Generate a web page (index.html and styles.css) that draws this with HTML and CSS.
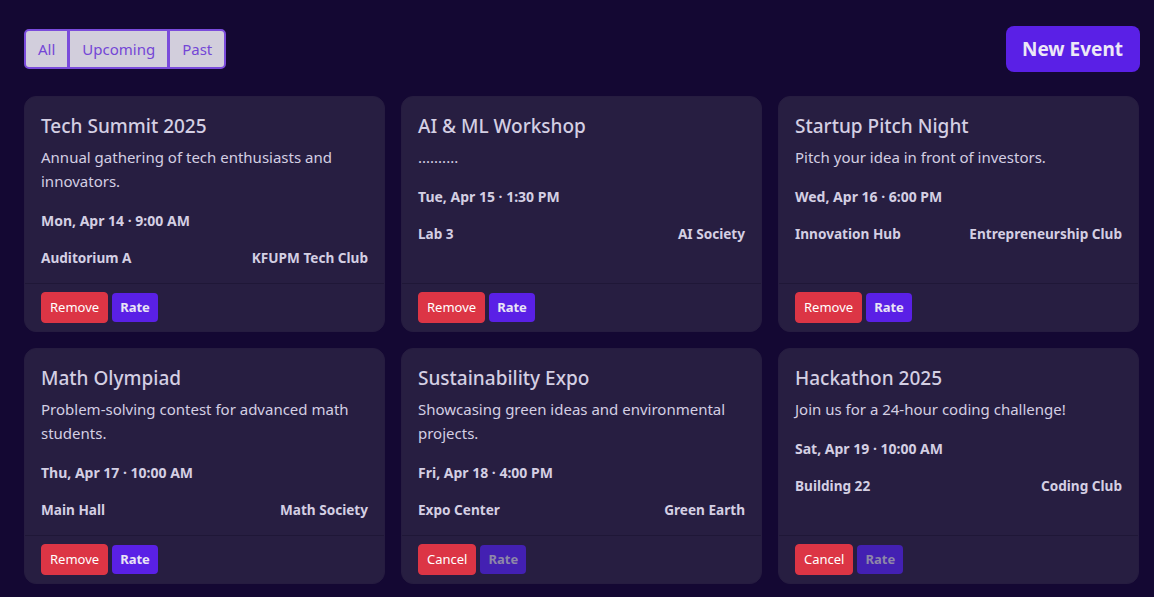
FILE: index.html
```html
<!DOCTYPE html>
<html lang="en">
<head>
<meta charset="utf-8">
<title>Events</title>
<link rel="stylesheet" href="styles.css">
</head>
<body>
<div class="page">
  <div class="toolbar">
    <div class="filters">
      <button class="filter">All</button>
      <button class="filter">Upcoming</button>
      <button class="filter">Past</button>
    </div>
    <button class="new-event">New Event</button>
  </div>
  <div class="grid">
    <div class="card">
      <div class="card-body">
        <h5 class="title">Tech Summit 2025</h5>
        <p class="desc">Annual gathering of tech enthusiasts and innovators.</p>
        <p class="date">Mon, Apr 14 · 9:00 AM</p>
        <div class="meta"><span>Auditorium A</span><span>KFUPM Tech Club</span></div>
      </div>
      <div class="card-footer"><button class="btn danger">Remove</button><button class="btn rate">Rate</button></div>
    </div>
    <div class="card">
      <div class="card-body">
        <h5 class="title">AI &amp; ML Workshop</h5>
        <p class="desc">..........</p>
        <p class="date">Tue, Apr 15 · 1:30 PM</p>
        <div class="meta"><span>Lab 3</span><span>AI Society</span></div>
      </div>
      <div class="card-footer"><button class="btn danger">Remove</button><button class="btn rate">Rate</button></div>
    </div>
    <div class="card">
      <div class="card-body">
        <h5 class="title">Startup Pitch Night</h5>
        <p class="desc">Pitch your idea in front of investors.</p>
        <p class="date">Wed, Apr 16 · 6:00 PM</p>
        <div class="meta"><span>Innovation Hub</span><span>Entrepreneurship Club</span></div>
      </div>
      <div class="card-footer"><button class="btn danger">Remove</button><button class="btn rate">Rate</button></div>
    </div>
    <div class="card">
      <div class="card-body">
        <h5 class="title">Math Olympiad</h5>
        <p class="desc">Problem-solving contest for advanced math students.</p>
        <p class="date">Thu, Apr 17 · 10:00 AM</p>
        <div class="meta"><span>Main Hall</span><span>Math Society</span></div>
      </div>
      <div class="card-footer"><button class="btn danger">Remove</button><button class="btn rate">Rate</button></div>
    </div>
    <div class="card">
      <div class="card-body">
        <h5 class="title">Sustainability Expo</h5>
        <p class="desc">Showcasing green ideas and environmental projects.</p>
        <p class="date">Fri, Apr 18 · 4:00 PM</p>
        <div class="meta"><span>Expo Center</span><span>Green Earth</span></div>
      </div>
      <div class="card-footer"><button class="btn danger">Cancel</button><button class="btn rate disabled">Rate</button></div>
    </div>
    <div class="card">
      <div class="card-body">
        <h5 class="title">Hackathon 2025</h5>
        <p class="desc">Join us for a 24-hour coding challenge!</p>
        <p class="date">Sat, Apr 19 · 10:00 AM</p>
        <div class="meta"><span>Building 22</span><span>Coding Club</span></div>
      </div>
      <div class="card-footer"><button class="btn danger">Cancel</button><button class="btn rate disabled">Rate</button></div>
    </div>
  </div>
</div>
</body>
</html>
```

FILE: styles.css
```css
* { box-sizing: border-box; }
html, body { margin: 0; padding: 0; }
body {
  background: #140833;
  color: #d4cfe3;
  font-family: "Noto Sans", "Open Sans", sans-serif;
  font-size: 16px;
  line-height: 1.5;
}
.page {
  padding: 26px 15px 0 24px;
}
.toolbar {
  display: flex;
  justify-content: space-between;
  align-items: center;
  margin-bottom: 24px;
}
.filters {
  display: flex;
  border-radius: 5px;
}
.filter {
  font-family: inherit;
  font-size: 15px;
  line-height: 22px;
  color: #7446d6;
  background: #d2cedc;
  border: 2px solid #7a4bdb;
  padding: 7px 12px;
  margin: 0;
  height: 40px;
}
.filter + .filter { margin-left: -1px; }
.filter:first-child { border-radius: 5px 0 0 5px; }
.filter:last-child { border-radius: 0 5px 5px 0; }
.new-event {
  font-family: inherit;
  font-weight: 700;
  font-size: 19px;
  line-height: 28px;
  color: #ece8f6;
  background: #5a20e6;
  border: none;
  border-radius: 8px;
  padding: 9px 17px 9px 16px;
  margin-right: -1px;
  height: 46px;
}
.grid {
  display: grid;
  grid-template-columns: repeat(3, 1fr);
  gap: 16px;
}
.card {
  display: flex;
  flex-direction: column;
  background: #271e41;
  border: 1px solid #261c40;
  border-radius: 12px;
}
.card-body {
  flex: 1;
  padding: 17px 16px 0;
}
.title {
  margin: 0 0 7px;
  font-size: 19px;
  font-weight: 500;
  line-height: 24px;
  color: #d4cfe3;
}
.desc {
  margin: 0 0 17px;
  font-size: 15px;
  line-height: 24px;
}
.date {
  margin: 0 0 16px;
  font-size: 14px;
  font-weight: 700;
  line-height: 21px;
}
.meta {
  display: flex;
  justify-content: space-between;
  font-size: 13.6px;
  font-weight: 700;
  line-height: 21px;
  margin-bottom: 15px;
}
.card-footer {
  display: flex;
  gap: 4px;
  align-items: center;
  padding: 8px 16px;
  border-top: 1px solid #1f1737;
}
.btn {
  font-family: inherit;
  font-size: 13px;
  line-height: 21px;
  border-radius: 4px;
  padding: 4px 8px;
  margin: 0;
  cursor: pointer;
}
.danger {
  background: #dc3545;
  border: 1px solid #dc3545;
  color: #fff;
}
.rate {
  background: #5a20e6;
  border: none;
  color: #e9e5f5;
  font-weight: 700;
  height: 29px;
}
.rate.disabled {
  background: #4320b2;
  color: #8e87a8;
}
```
